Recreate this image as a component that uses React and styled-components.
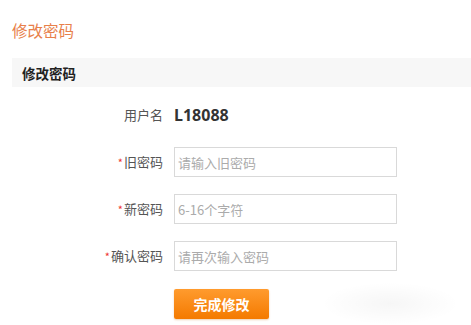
import React from "react";
import styled, { createGlobalStyle } from "styled-components";

const Global = createGlobalStyle`
  html, body { margin: 0; padding: 0; background: #fff; }
  body { font-family: "Noto Sans CJK SC", "Noto Sans", sans-serif; width: 471px; height: 325px; overflow: hidden; }
  * { box-sizing: border-box; }
`;

const Page = styled.div`
  position: relative;
  padding-left: 12px;
  height: 325px;
`;

const Title = styled.h1`
  margin: 0;
  padding-top: 19px;
  height: 58px;
  font-size: 15.5px;
  line-height: 22px;
  font-weight: normal;
  color: #e8804a;
`;

const SectionBar = styled.div`
  height: 29px;
  background: #f7f7f7;
  display: flex;
  align-items: center;
  padding-left: 10px;
  font-size: 13.5px;
  font-weight: bold;
  color: #222;
`;

const Form = styled.div`
  display: grid;
  grid-template-columns: 151px 223px;
  grid-auto-rows: 30px;
  column-gap: 11px;
  row-gap: 17px;
  margin-top: 13px;
  align-items: center;
`;

const Label = styled.label`
  text-align: right;
  font-size: 13px;
  color: #555;
  height: 30px;
  line-height: 30px;
`;

const Star = styled.span`
  color: #e33;
  font-size: 11px;
  margin-right: 1px;
`;

const Value = styled.div`
  font-size: 16px;
  font-weight: bold;
  color: #333;
  line-height: 30px;
  font-family: "Noto Sans", "Noto Sans CJK SC", sans-serif;
`;

const Input = styled.input`
  width: 223px;
  height: 30px;
  border: 1px solid #d9d9d9;
  padding: 0 3px;
  font-size: 13px;
  font-family: "Noto Sans CJK SC", "Noto Sans", sans-serif;
  color: #333;
  outline: none;
  background: #fff;
  &::placeholder { color: #ababab; }
`;

const Submit = styled.button`
  width: 95px;
  height: 30px;
  margin-top: 1px;
  border: none;
  border-radius: 2px;
  background: linear-gradient(#ff9b2e, #f47a00);
  color: #fff;
  font-size: 14px;
  font-weight: bold;
  font-family: "Noto Sans CJK SC", sans-serif;
  box-shadow: 0 1px 2px rgba(200, 100, 0, 0.3);
  cursor: pointer;
`;

const Haze = styled.div`
  position: absolute;
  left: 320px;
  top: 282px;
  width: 140px;
  height: 43px;
  background: radial-gradient(ellipse at center, rgba(0,0,0,0.035), rgba(0,0,0,0) 70%);
  pointer-events: none;
`;

export default function App() {
  return (
    <>
      <Global />
      <Page>
        <Title>修改密码</Title>
        <SectionBar>修改密码</SectionBar>
        <Form>
          <Label>用户名</Label>
          <Value>L18088</Value>
          <Label><Star>*</Star>旧密码</Label>
          <Input type="password" placeholder="请输入旧密码" />
          <Label><Star>*</Star>新密码</Label>
          <Input type="password" placeholder="6-16个字符" />
          <Label><Star>*</Star>确认密码</Label>
          <Input type="password" placeholder="请再次输入密码" />
          <span />
          <Submit>完成修改</Submit>
        </Form>
        <Haze />
      </Page>
    </>
  );
}
